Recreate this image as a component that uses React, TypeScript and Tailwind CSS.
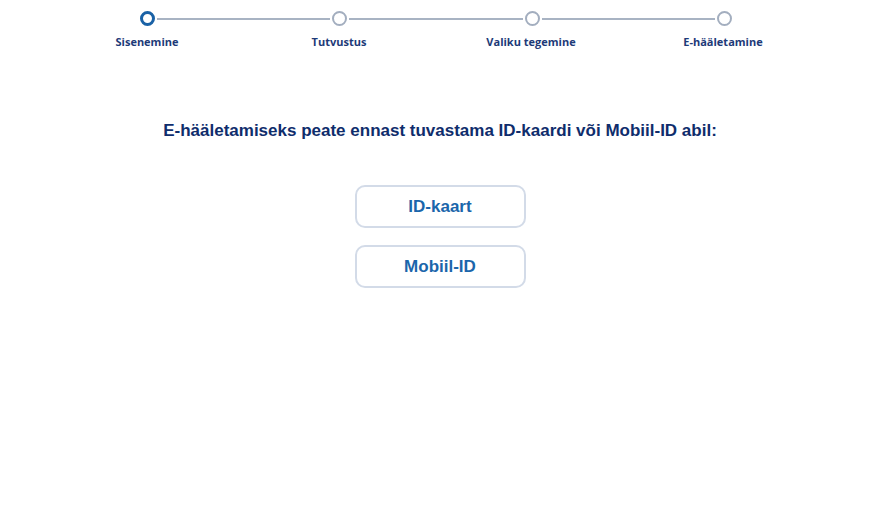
import React from "react";

const steps = ["Sisenemine", "Tutvustus", "Valiku tegemine", "E-hääletamine"];

function Circle({ active }: { active?: boolean }) {
  return active ? (
    <div className="w-[15px] h-[15px] rounded-full border-[3px] border-[#1a62a6] bg-white shrink-0" />
  ) : (
    <div className="w-[15px] h-[15px] rounded-full border-2 border-[#a3aebf] bg-white shrink-0" />
  );
}

export default function App() {
  return (
    <div className="w-[880px] h-[516px] bg-white overflow-hidden">
      <div className="ml-[140px] w-[592px] flex items-center pt-[11px]">
        <Circle active />
        <div className="flex-1 h-[2px] bg-[#a8b3c3] mx-[2px]" />
        <Circle />
        <div className="flex-1 h-[2px] bg-[#a8b3c3] mx-[2px]" />
        <Circle />
        <div className="flex-1 h-[2px] bg-[#a8b3c3] mx-[2px]" />
        <Circle />
      </div>
      <div className="ml-[51px] grid grid-cols-[repeat(4,192px)] mt-[8px]">
        {steps.map((s) => (
          <div
            key={s}
            className="text-center text-[11px] leading-[15px] font-bold text-[#1d3a78] font-['Open_Sans',sans-serif]"
          >
            {s}
          </div>
        ))}
      </div>
      <h1 className="mt-[71px] text-center text-[17px] leading-[21px] font-bold text-[#0f2d6c] font-['Liberation_Sans',Arial,sans-serif]">
        E-hääletamiseks peate ennast tuvastama ID-kaardi või Mobiil-ID abil:
      </h1>
      <div className="mt-[44px] flex flex-col items-center gap-[17px]">
        <button className="w-[171px] h-[43px] rounded-[10px] border-2 border-[#d3dbe8] bg-white text-[17px] font-bold text-[#1b66ab] font-['Liberation_Sans',Arial,sans-serif]">
          ID-kaart
        </button>
        <button className="w-[171px] h-[43px] rounded-[10px] border-2 border-[#d3dbe8] bg-white text-[17px] font-bold text-[#1b66ab] font-['Liberation_Sans',Arial,sans-serif]">
          Mobiil-ID
        </button>
      </div>
    </div>
  );
}
